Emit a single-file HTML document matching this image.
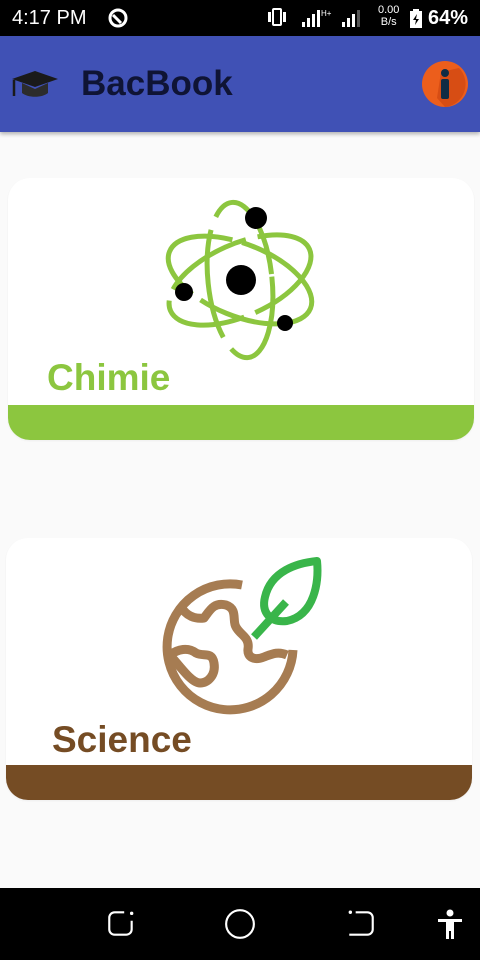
<!DOCTYPE html>
<html><head><meta charset="utf-8"><style>
*{margin:0;padding:0;box-sizing:border-box}
body{width:480px;height:960px;background:#fafafa;font-family:"Liberation Sans",sans-serif;position:relative;overflow:hidden}
.sb{position:absolute;top:0;left:0;width:480px;height:36px;background:#000;color:#fff}
.ab{position:absolute;top:36px;left:0;width:480px;height:96px;background:#4051b5;box-shadow:0 2px 4px rgba(0,0,0,.3)}
.card{position:absolute;background:#fff;border-radius:22px;overflow:hidden;box-shadow:0 1px 2px rgba(0,0,0,.05)}
.band{position:absolute;left:0;right:0;bottom:0;height:35px}
.lbl{position:absolute;font-weight:bold;font-size:37px;letter-spacing:0px}
.nav{position:absolute;left:0;top:888px;width:480px;height:72px;background:#000}
</style></head><body>
<div class="sb">
<div style="position:absolute;left:12px;top:7px;font-size:20px;">4:17 PM</div>
<svg style="position:absolute;left:107px;top:7px" width="22" height="22" viewBox="0 0 22 22"><circle cx="11" cy="11" r="8" fill="none" stroke="#fff" stroke-width="3"/><path d="M6 8l8 8" stroke="#fff" stroke-width="3"/></svg>
<svg style="position:absolute;left:266px;top:8px" width="100" height="20" viewBox="0 0 100 20"><rect x="2" y="4" width="3" height="10" fill="#fff"/><rect x="7" y="1" width="8" height="16" rx="1" fill="none" stroke="#fff" stroke-width="2"/><rect x="17" y="4" width="3" height="10" fill="#fff"/><rect x="36" y="14" width="3" height="5" fill="#fff"/><rect x="41" y="10" width="3" height="9" fill="#fff"/><rect x="46" y="6" width="3" height="13" fill="#fff"/><rect x="51" y="2" width="3" height="17" fill="#fff"/><text x="55" y="8" font-size="8" fill="#fff" font-family="Liberation Sans">H+</text><rect x="76" y="14" width="3" height="5" fill="#fff"/><rect x="81" y="10" width="3" height="9" fill="#fff"/><rect x="86" y="6" width="3" height="13" fill="#fff"/><rect x="91" y="2" width="3" height="17" fill="#555"/></svg>
<div style="position:absolute;left:378px;top:4px;font-size:11px;line-height:12px;text-align:center">0.00<br>B/s</div>
<svg style="position:absolute;left:410px;top:9px" width="12" height="19" viewBox="0 0 12 19"><rect x="0" y="2" width="12" height="17" fill="#fff"/><rect x="3" y="0" width="6" height="3" fill="#fff"/><path d="M7 5l-4 6h3l-1 5 4-6h-3z" fill="#000"/></svg>
<div style="position:absolute;left:428px;top:7px;font-size:20px;font-weight:bold">64%</div>
</div>
<div class="ab">
<svg style="position:absolute;left:10px;top:33px" width="50" height="32" viewBox="0 0 50 32"><path d="M2 10L25 2 48 10 25 18z" fill="#1a1a1a"/><path d="M12 14v10c6 5 20 5 26 0V14L25 20z" fill="#2c2c2c"/><path d="M4 11v16" stroke="#1a1a1a" stroke-width="2.5"/></svg>
<div style="position:absolute;left:81px;top:28px;font-size:35px;font-weight:bold;color:#0f1435">BacBook</div>
<svg style="position:absolute;left:421px;top:24px" width="48" height="48" viewBox="0 0 48 48"><circle cx="24" cy="24" r="23" fill="#ec5e1c"/><path d="M38 8A23 23 0 0 1 24 47L16 38 20 12z" fill="#c9430f" opacity=".6"/><circle cx="24" cy="13" r="4" fill="#0f2c45"/><rect x="20" y="19" width="8" height="20" rx="2" fill="#0f2c45"/></svg>
</div>

<div class="card" style="left:8px;top:178px;width:466px;height:262px">
<div class="band" style="background:#8cc63f"></div>
<div class="lbl" style="left:39px;top:179px;color:#8cc63f">Chimie</div>
<svg style="position:absolute;left:152px;top:20px" width="160" height="165" viewBox="0 0 160 165">
<g fill="none" stroke="#8cc63f" stroke-width="5" stroke-dasharray="120 10">
<ellipse cx="80" cy="82" rx="76" ry="36" transform="rotate(22 80 82)"/>
<ellipse cx="80" cy="82" rx="76" ry="36" transform="rotate(-24 80 82)" stroke-dasharray="90 12"/>
<ellipse cx="80" cy="82" rx="32" ry="78" transform="rotate(-6 80 82)" stroke-dasharray="110 14"/>
</g>
<circle cx="81" cy="82" r="15" fill="#000"/>
<circle cx="96" cy="20" r="11" fill="#000"/>
<circle cx="24" cy="94" r="9" fill="#000"/>
<circle cx="125" cy="125" r="8" fill="#000"/>
</svg>
</div>

<div class="card" style="left:6px;top:538px;width:466px;height:262px">
<div class="band" style="background:#754c24"></div>
<div class="lbl" style="left:46px;top:181px;color:#754c24">Science</div>
<svg style="position:absolute;left:144px;top:7px" width="180" height="180" viewBox="0 0 180 180">
<g fill="none" stroke="#a67c52" stroke-width="9" stroke-linejoin="round">
<path d="M92 40A63 63 0 1 0 143 105"/>
<path d="M30 60c6 12 16 14 24 13 6-8 10-16 22-13 12 4 6 16 10 22 4 8 14 10 12 22-1 8 6 12 16 8 8-3 14-6 23-2"/>
<path d="M20 110c8-6 18-8 26-2 8 4 16-2 18 10 2 12-6 20-14 20-8 0-18-14-30-28z"/>
</g>
<g fill="none" stroke="#39b54a" stroke-width="8" stroke-linejoin="round">
<path d="M167 16c-20 2-46 10-52 36-4 16 6 26 22 24 28-6 32-40 30-60z"/>
<path d="M136 57L104 92"/>
</g>
</svg>
</div>

<div class="nav">
<svg style="position:absolute;left:105px;top:20px" width="32" height="32" viewBox="0 0 30 30"><path d="M18 4H9a5 5 0 0 0-5 5v11a5 5 0 0 0 5 5h11a5 5 0 0 0 5-5v-8" fill="none" stroke="#fff" stroke-width="2"/><circle cx="25" cy="5" r="1.6" fill="#fff"/></svg>
<svg style="position:absolute;left:224px;top:20px" width="32" height="32" viewBox="0 0 30 30"><circle cx="15" cy="15" r="13" fill="none" stroke="#fff" stroke-width="2"/></svg>
<svg style="position:absolute;left:345px;top:20px" width="32" height="32" viewBox="0 0 30 30"><path d="M10 4h11a5 5 0 0 1 5 5v11a5 5 0 0 1-5 5H4" fill="none" stroke="#fff" stroke-width="2"/><circle cx="5" cy="4" r="1.6" fill="#fff"/></svg>
<svg style="position:absolute;left:437px;top:20px" width="26" height="32" viewBox="0 0 26 30"><circle cx="13" cy="4" r="3.5" fill="#fff"/><path d="M1 10h24v3h-8v17h-3v-8h-2v8H9V13H1z" fill="#fff"/></svg>
</div>
</body></html>
